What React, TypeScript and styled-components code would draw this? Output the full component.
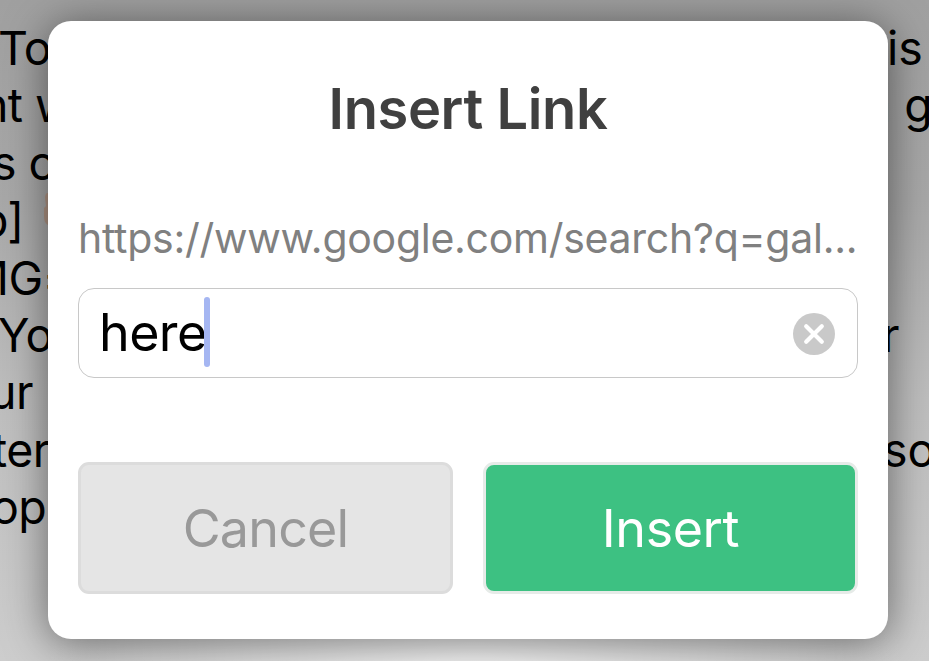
import React from "react";
import styled, { createGlobalStyle } from "styled-components";

const GlobalStyle = createGlobalStyle`
  * { box-sizing: border-box; }
  html, body { margin: 0; padding: 0; }
  body { overflow: hidden; font-family: Inter, "Liberation Sans", sans-serif; }
`;

const Screen = styled.main`
  display: grid;
  width: 929px;
  height: 661px;
  overflow: hidden;
  background:
    radial-gradient(ellipse 430px 480px at 475px 700px, rgba(255, 255, 255, 0.95), rgba(255, 255, 255, 0) 100%),
    linear-gradient(180deg, #a0a0a0 0, #a8a8a8 200px, #bebebe 400px, #cdcdcd 661px);
`;

const Page = styled.div`
  grid-area: 1 / 1;
  padding-top: 20px;
  overflow: hidden;
  font-size: 46.5px;
  line-height: 57.4px;
  color: #000;
`;

const Line = styled.div`
  display: grid;
  grid-template-columns: 48px 1fr 43px;
  height: 57.4px;
  white-space: pre;
`;

const Leading = styled.span<{ $shift: number }>`
  grid-column: 1;
  display: flex;
  width: 48px;
  overflow: hidden;
  text-indent: ${(p) => p.$shift}px;
  letter-spacing: -0.6px;
`;

const Words = styled.span`
  flex: 0 0 50px;
`;

const Trailing = styled.span<{ $shift: number }>`
  grid-column: 3;
  overflow: hidden;
  text-indent: ${(p) => p.$shift}px;
`;

const Emoji = styled.svg`
  flex: none;
  width: 6px;
  height: 34px;
  margin: 1px 0 0 -6px;
`;

const Dialog = styled.section`
  grid-area: 1 / 1;
  z-index: 1;
  display: flex;
  flex-direction: column;
  width: 840px;
  height: 618px;
  margin: 21px 0 0 48px;
  padding: 56px 30px 45px;
  border-radius: 23px;
  background: #fff;
  box-shadow: 0 5px 44px rgba(0, 0, 0, 0.5);
`;

const Title = styled.h1`
  margin: 0;
  font-size: 56px;
  line-height: 64px;
  font-weight: 600;
  letter-spacing: -0.4px;
  text-align: center;
  color: #404040;
`;

const Address = styled.p`
  margin: 70px 0 0;
  font-size: 41px;
  line-height: 54px;
  letter-spacing: -0.27px;
  white-space: nowrap;
  color: #808080;
`;

const Field = styled.div`
  display: flex;
  align-items: center;
  height: 90px;
  margin-top: 23px;
  padding: 0 22px 0 20px;
  border: 1px solid #c8c8c8;
  border-radius: 16px;
`;

const Value = styled.span`
  font-size: 52px;
  line-height: 88px;
  letter-spacing: -0.6px;
  color: #000;
`;

const Caret = styled.i`
  width: 6px;
  height: 70px;
  margin: -2px 0 0 -3px;
  border-radius: 3px;
  background: #a5b6f2;
`;

const Clear = styled.button`
  width: 42px;
  height: 42px;
  margin: 1px 0 0 auto;
  padding: 0;
  border: 0;
  background: none;
  svg { display: block; }
`;

const Actions = styled.div`
  display: grid;
  grid-template-columns: 375px 375px;
  gap: 30px;
  margin-top: 84px;
`;

const Action = styled.button<{ $primary?: boolean }>`
  height: 132px;
  padding: 1px 0 0;
  border: 3px solid ${(p) => (p.$primary ? "#e6ebe8" : "#dcdcdc")};
  border-radius: 11px;
  background: ${(p) => (p.$primary ? "#3dc182" : "#e5e5e5")};
  color: ${(p) => (p.$primary ? "#fff" : "#999")};
  font: 400 52px/60px Inter, "Liberation Sans", sans-serif;
  letter-spacing: ${(p) => (p.$primary ? "-0.4px" : "-0.8px")};
`;

type PageLine = { start: string; startShift: number; end?: string; endShift?: number; emoji?: boolean };

const lines: PageLine[] = [
  { start: "To", startShift: -2, end: "is", endShift: 1 },
  { start: "nt w", startShift: -19, end: "a g", endShift: -21 },
  { start: "s o", startShift: -8 },
  { start: "p]", startShift: -20, emoji: true },
  { start: "MG=", startShift: -33 },
  { start: "You", startShift: -2, end: "r", endShift: -4 },
  { start: "ur", startShift: -11 },
  { start: "ter", startShift: -8, end: "so", endShift: -3 },
  { start: "op", startShift: -9 },
];

export default function App() {
  return (
    <>
      <GlobalStyle />
      <Screen>
        <Page>
          {lines.map((l) => (
            <Line key={l.start}>
              <Leading $shift={l.startShift}>
                <Words>{l.start}</Words>
                {l.emoji && (
                  <Emoji viewBox="0 0 6 34">
                    <path d="M3 0H6V33C1 31 0 28 0 22V15L2 13L1 5Q1 1 3 0Z" fill="#b09585" />
                  </Emoji>
                )}
              </Leading>
              {l.end && <Trailing $shift={l.endShift ?? 0}>{l.end}</Trailing>}
            </Line>
          ))}
        </Page>
        <Dialog role="dialog">
          <Title>Insert Link</Title>
          <Address>https://www.google.com/search?q=gal...</Address>
          <Field>
            <Value>here</Value>
            <Caret />
            <Clear aria-label="Clear">
              <svg width="42" height="42" viewBox="0 0 42 42">
                <circle cx="21" cy="21" r="21" fill="#c9c9c9" />
                <path d="M13.2 13.2L28.8 28.8M28.8 13.2L13.2 28.8" stroke="#fff" strokeWidth="4.2" strokeLinecap="round" />
              </svg>
            </Clear>
          </Field>
          <Actions>
            <Action>Cancel</Action>
            <Action $primary>Insert</Action>
          </Actions>
        </Dialog>
      </Screen>
    </>
  );
}
